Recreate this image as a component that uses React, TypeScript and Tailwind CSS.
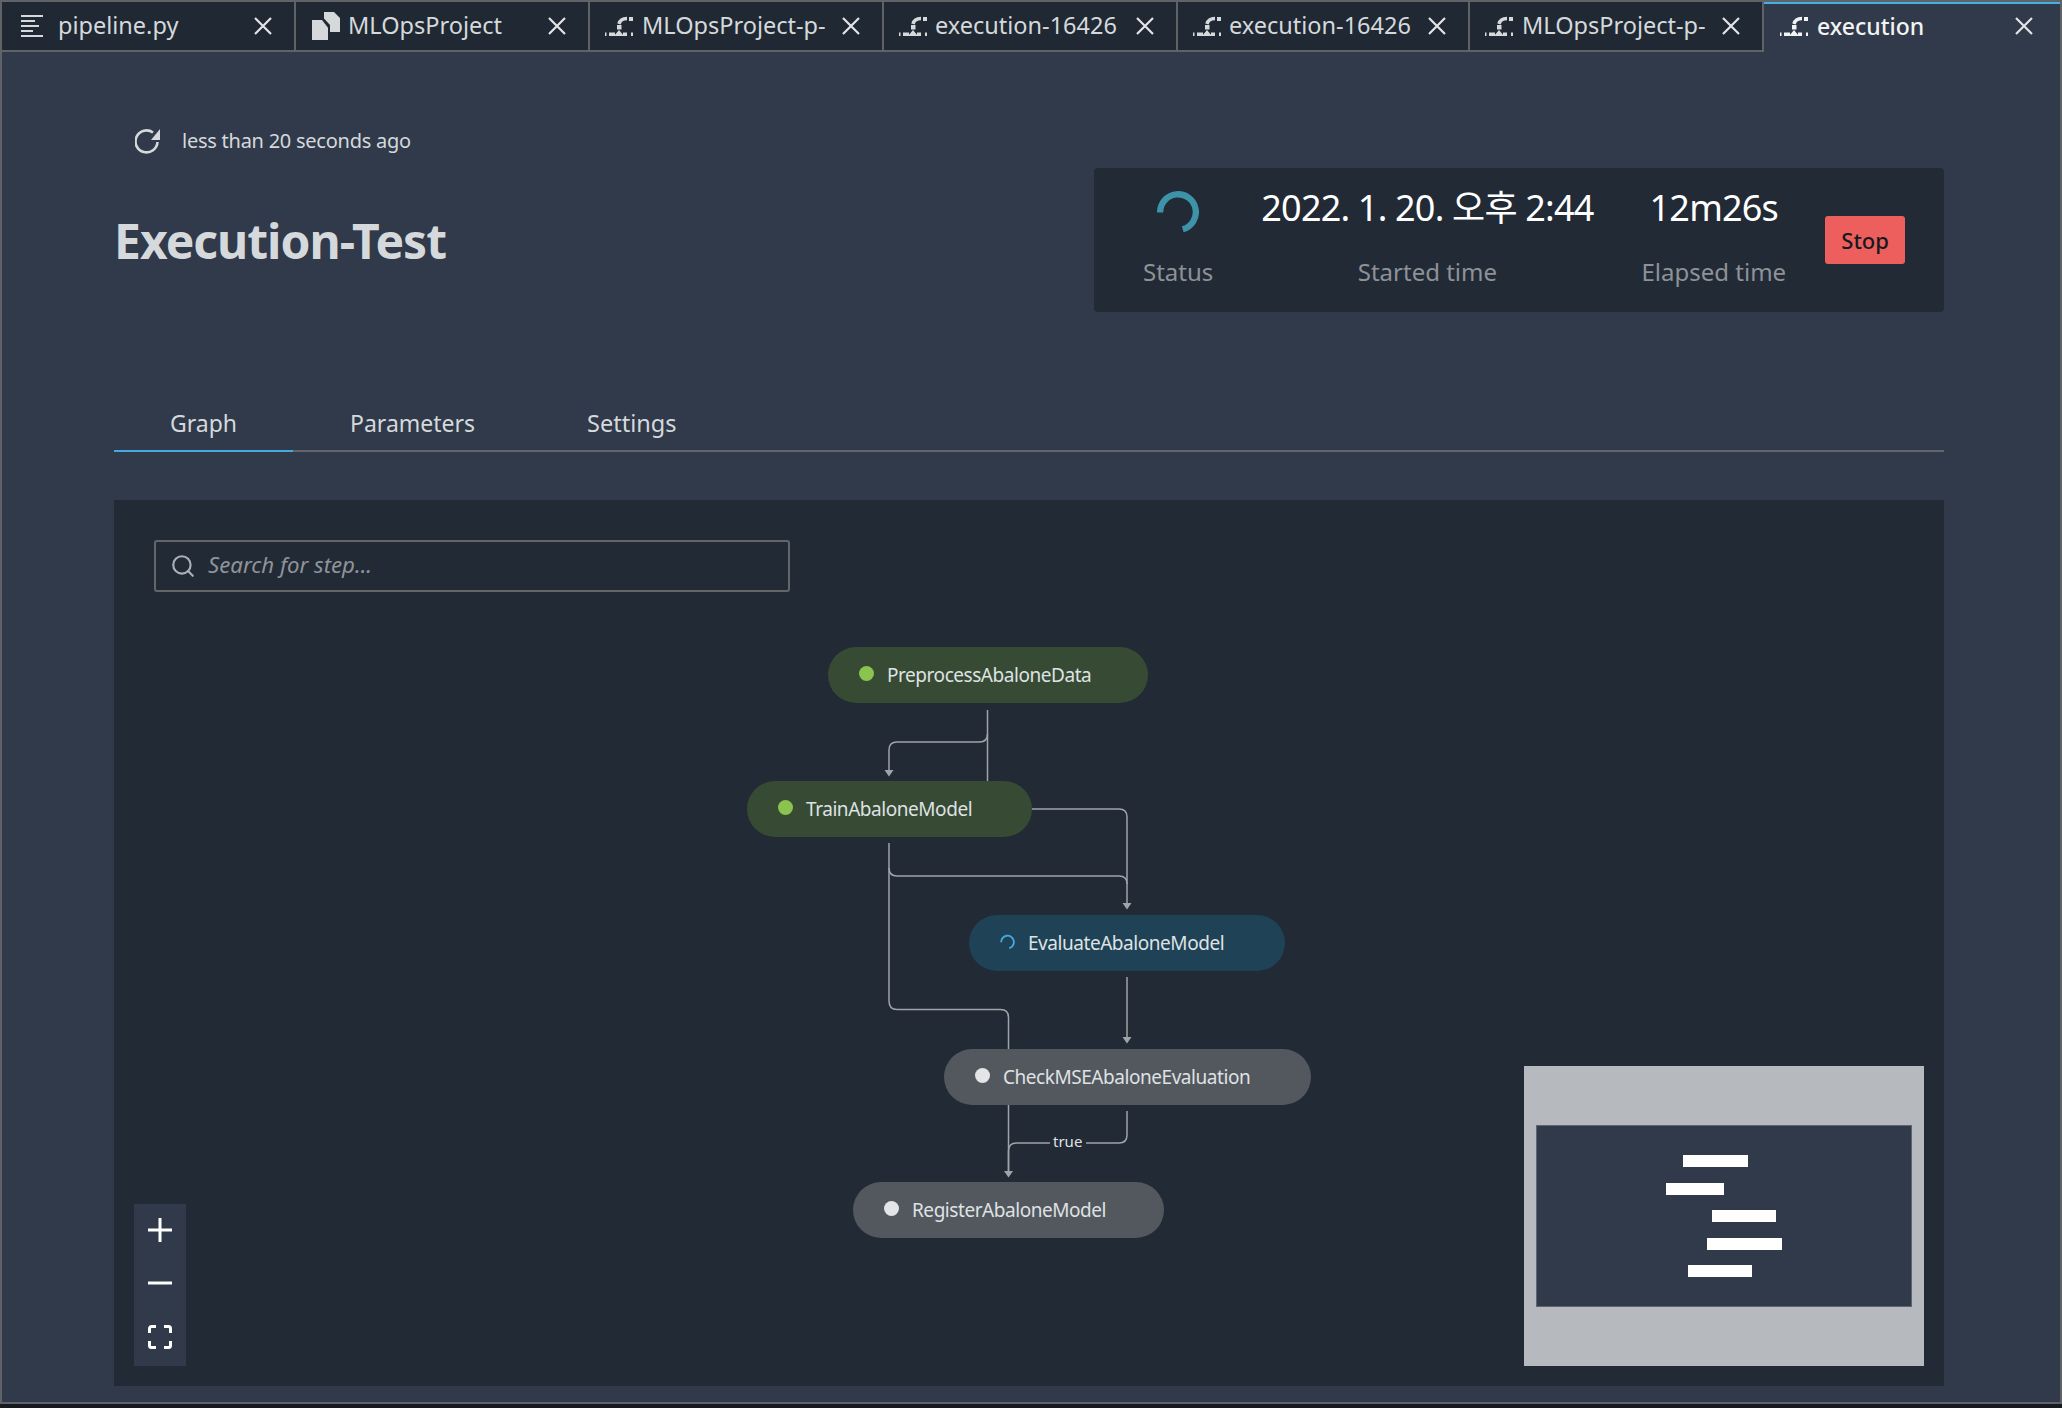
import { Search } from 'lucide-react';

const FONT = "font-['Noto_Sans','Noto_Sans_CJK_KR',sans-serif]";

function FileIcon() {
  return (
    <svg width="22" height="22" viewBox="0 0 22 22" fill="none" stroke="#d5d9dc" strokeWidth="2">
      <path d="M0 1h22M0 6h14M0 11h18M0 16h12M0 21h22" />
    </svg>
  );
}

function ProjectIcon() {
  return (
    <svg width="28" height="28" viewBox="6 6 28 28" fill="#d5d9dc">
      <path d="M6 14h10l6 7.700V34H6z" />
      <path d="M18 6h10l6 6v14H24v-7l-6-6.500z" />
    </svg>
  );
}

function PipelineIcon({ color = '#d5d9dc' }: { color?: string }) {
  return (
    <svg width="28" height="20" viewBox="0 0 28 20" fill={color}>
      <path d="M24 1h4v4h-4z" />
      <path d="M14 8C15 4 17.500 2.500 22 2.500" fill="none" stroke={color} strokeWidth="3.500" />
      <path d="M12 9h4.500v4.500H12z" />
      <path d="M0 16.500h1.500V20H0zM4 16.500h6V20H4zM9 20l5-6 5 6zM18 16.500h4V20h-4zM26 16.500h2V20h-2z" />
    </svg>
  );
}

function CloseIcon() {
  return (
    <svg width="18" height="18" viewBox="0 0 18 18" stroke="#e3e5e7" strokeWidth="2.200" fill="none">
      <path d="M1 1l16 16M17 1L1 17" />
    </svg>
  );
}

function RefreshIcon() {
  return (
    <svg width="28" height="28" viewBox="8 9 28 28" fill="none">
      <path d="M30.500 24A11 11 0 1 1 26 14.500" stroke="#d5d9dc" strokeWidth="2.600" />
      <path d="M33 11v11H24z" fill="#d5d9dc" />
    </svg>
  );
}

function Spinner({ size, stroke, color }: { size: number; stroke: number; color: string }) {
  return (
    <svg width={size} height={size} viewBox="0 0 40 40" fill="none">
      <path d="M3 20.500A17 17 0 1 1 24.500 36.500" stroke={color} strokeWidth={stroke} />
    </svg>
  );
}

const tabs = [
  { label: 'pipeline.py', icon: <FileIcon />, className: 'w-[294px] pl-[19px] gap-[15px]' },
  { label: 'MLOpsProject', icon: <ProjectIcon />, className: 'w-[294px] pl-[16px] gap-[8px]' },
  { label: 'MLOpsProject-p-', icon: <PipelineIcon />, className: 'w-[294px] pl-[15px] gap-[9px]' },
  { label: 'execution-16426', icon: <PipelineIcon />, className: 'w-[294px] pl-[15px] gap-[8px]' },
  { label: 'execution-16426', icon: <PipelineIcon />, className: 'w-[292px] pl-[15px] gap-[8px]' },
  { label: 'MLOpsProject-p-', icon: <PipelineIcon />, className: 'w-[294px] pl-[15px] gap-[9px]' },
];

function TabBar() {
  return (
    <div className="flex h-[50px]">
      {tabs.map((tab, i) => (
        <div
          key={i}
          className={`flex items-center h-[50px] shrink-0 bg-[#202833] border-b-2 border-r-2 border-[#5f6266] ${tab.className}`}
        >
          {tab.icon}
          <span className="text-[23.500px] leading-none text-[#d5d9dc] whitespace-nowrap">{tab.label}</span>
          <div className="ml-auto mr-[22px]">
            <CloseIcon />
          </div>
        </div>
      ))}
      <div className="flex flex-1 items-center h-[50px] pb-[4px] pl-[16px] gap-[9px] border-t-2 border-[#44b0e0]">
        <PipelineIcon color="#f2f3f3" />
        <span className="text-[23px] font-medium leading-none text-[#f2f3f3]">execution</span>
        <div className="ml-auto mr-[27px]">
          <CloseIcon />
        </div>
      </div>
    </div>
  );
}

function Stat({ value, label }: { value: React.ReactNode; label: string }) {
  return (
    <div className="flex flex-col items-center">
      <div className="h-[44px] flex items-center text-[36px] tracking-[-0.800px] leading-none text-white whitespace-nowrap">
        {value}
      </div>
      <div className="mt-[30px] text-[24px] leading-none text-[#8d9299] whitespace-nowrap">{label}</div>
    </div>
  );
}

function StatusBox() {
  return (
    <div className="flex items-start w-[850px] h-[144px] bg-[#222a35] rounded-[4px] pl-[49px] pt-[18px] gap-[48px]">
      <Stat
        value={
          <div className="mt-[8px]">
            <Spinner size={42} stroke={6} color="#3d93a8" />
          </div>
        }
        label="Status"
      />
      <Stat value="2022. 1. 20. 오후 2:44" label="Started time" />
      <Stat value="12m26s" label="Elapsed time" />
      <button className="mt-[30px] -ml-[9px] w-[80px] h-[48px] rounded-[3px] bg-[#ec5f5c] text-[22px] font-medium text-[#16191f]">
        Stop
      </button>
    </div>
  );
}

function GraphEdges() {
  const stroke = '#a0a4aa';
  return (
    <svg className="absolute left-0 top-0" width="1830" height="886" viewBox="114 500 1830 886" fill="none" stroke={stroke} strokeWidth="1.500">
      <path d="M987.500 710V781" />
      <path d="M987.500 734Q987.500 742 979.500 742H897Q889 742 889 750V771" />
      <path d="M1032 809H1119Q1127 809 1127 817V904" />
      <path d="M889 843V868Q889 876 897 876H1119Q1127 876 1127 884" />
      <path d="M889 868V1001Q889 1009.500 897 1009.500H1000.500Q1008.500 1009.500 1008.500 1017.500V1049" />
      <path d="M1127 977V1038" />
      <path d="M1008.500 1104V1172" />
      <path d="M1127 1111V1135Q1127 1143 1119 1143H1086" />
      <path d="M1050 1143H1016.500Q1008.500 1143 1008.500 1151V1172" />
      <g fill={stroke} stroke="none">
        <path d="M884.500 770h9l-4.500 6.500z" />
        <path d="M1122.500 903h9l-4.500 6.500z" />
        <path d="M1122.500 1037h9l-4.500 6.500z" />
        <path d="M1004 1171h9l-4.500 6.500z" />
      </g>
    </svg>
  );
}

const nodes = [
  { label: 'PreprocessAbaloneData', pos: 'left-[714px] top-[147px] w-[320px]', bg: 'bg-[#374a33]', dot: 'bg-[#8bc34f]' },
  { label: 'TrainAbaloneModel', pos: 'left-[633px] top-[281px] w-[285px]', bg: 'bg-[#374a33]', dot: 'bg-[#8bc34f]' },
  { label: 'EvaluateAbaloneModel', pos: 'left-[855px] top-[415px] w-[316px]', bg: 'bg-[#1f4257]', dot: '' },
  { label: 'CheckMSEAbaloneEvaluation', pos: 'left-[830px] top-[549px] w-[367px]', bg: 'bg-[#53575e]', dot: 'bg-[#e3e5e7]' },
  { label: 'RegisterAbaloneModel', pos: 'left-[739px] top-[682px] w-[311px]', bg: 'bg-[#53575e]', dot: 'bg-[#e3e5e7]' },
];

const miniBars = [
  'left-[146px] top-[29px] w-[65px]',
  'left-[129px] top-[57px] w-[58px]',
  'left-[175px] top-[84px] w-[64px]',
  'left-[170px] top-[112px] w-[75px]',
  'left-[151px] top-[139px] w-[64px]',
];

function Minimap() {
  return (
    <div className="absolute left-[1410px] top-[566px] w-[400px] h-[300px] bg-[#b6b9bd] flex items-center justify-center">
      <div className="relative w-[376px] h-[182px] bg-[#303a4a] border border-[#5f6670]">
        {miniBars.map((bar) => (
          <div key={bar} className={`absolute h-[12px] bg-white ${bar}`} />
        ))}
      </div>
    </div>
  );
}

function ZoomControls() {
  return (
    <div className="absolute left-[20px] top-[704px] w-[52px] h-[162px] bg-[#303a4a] flex flex-col items-center">
      <div className="h-[52px] flex items-center justify-center">
        <svg width="24" height="24" viewBox="0 0 24 24" stroke="#fff" strokeWidth="3">
          <path d="M12 0v24M0 12h24" />
        </svg>
      </div>
      <div className="h-[54px] flex items-center justify-center">
        <svg width="24" height="24" viewBox="0 0 24 24" stroke="#fff" strokeWidth="3">
          <path d="M0 12h24" />
        </svg>
      </div>
      <div className="h-[54px] flex items-center justify-center">
        <svg width="24" height="24" viewBox="0 0 24 24" fill="none" stroke="#fff" strokeWidth="3">
          <path d="M1.500 8V3.500a2 2 0 0 1 2-2H8M16 1.500h4.500a2 2 0 0 1 2 2V8M22.500 16v4.500a2 2 0 0 1-2 2H16M8 22.500H3.500a2 2 0 0 1-2-2V16" />
        </svg>
      </div>
    </div>
  );
}

function GraphPanel() {
  return (
    <div className="relative mt-[48px] h-[886px] bg-[#222a35] pt-[40px] pl-[40px]">
      <div className="flex items-center w-[636px] h-[52px] border-2 border-[#62666b] rounded-[3px] pl-[14px] gap-[12px]">
        <Search size={26} color="#aab0b6" strokeWidth={2} />
        <span className="-mt-[2px] text-[22.200px] italic text-[#8f949a]">Search for step...</span>
      </div>
      <GraphEdges />
      {nodes.map((node) => (
        <div
          key={node.label}
          className={`absolute h-[56px] rounded-[28px] flex items-center pl-[31px] gap-[13px] ${node.pos} ${node.bg}`}
        >
          {node.dot ? (
            <div className={`w-[15px] h-[15px] rounded-full -mt-[3px] ${node.dot}`} />
          ) : (
            <div className="w-[15px] h-[15px] -mt-[3px] flex">
              <Spinner size={16} stroke={5} color="#44a9dc" />
            </div>
          )}
          <span className="text-[19px] tracking-[-0.450px] leading-none text-[#dfe2e4] whitespace-nowrap">{node.label}</span>
        </div>
      ))}
      <span className="absolute left-[939px] top-[634px] text-[15px] leading-none text-[#dfe2e4]">true</span>
      <ZoomControls />
      <Minimap />
    </div>
  );
}

export default function App() {
  return (
    <div className={`w-[2062px] h-[1408px] bg-[#16191f] overflow-hidden ${FONT}`}>
      <div className="h-[1404px] border-2 border-[#5f6266] bg-[#303a4a]">
        <TabBar />
        <div className="pl-[112px] pr-[116px]">
          <div className="flex justify-between h-[262px] pt-[66px]">
            <div>
              <div className="flex items-center h-[50px] pl-[21px] gap-[19px] -mt-[2px]">
                <RefreshIcon />
                <span className="text-[20px] tracking-[-0.250px] leading-none text-[#d5d9dc]">less than 20 seconds ago</span>
              </div>
              <h1 className="mt-[51px] text-[48px] tracking-[-1px] leading-none font-bold text-[#d5d9dc]">Execution-Test</h1>
            </div>
            <div className="pt-[50px]">
              <StatusBox />
            </div>
          </div>
          <div className="flex h-[138px] items-end">
            <div className="flex w-full border-b-2 border-[#62666b]">
              <div className="relative h-[50px] px-[56px] text-[23px] leading-none text-[#d5d9dc] pt-[12px]">
                Graph
                <div className="absolute left-0 right-0 -bottom-[2px] h-[2px] bg-[#44a9dc]" />
              </div>
              <div className="h-[50px] pl-[57px] pr-[56px] text-[23px] leading-none text-[#d5d9dc] pt-[12px]">Parameters</div>
              <div className="h-[50px] px-[56px] text-[23.500px] leading-none text-[#d5d9dc] pt-[12px]">Settings</div>
            </div>
          </div>
          <GraphPanel />
        </div>
      </div>
    </div>
  );
}
